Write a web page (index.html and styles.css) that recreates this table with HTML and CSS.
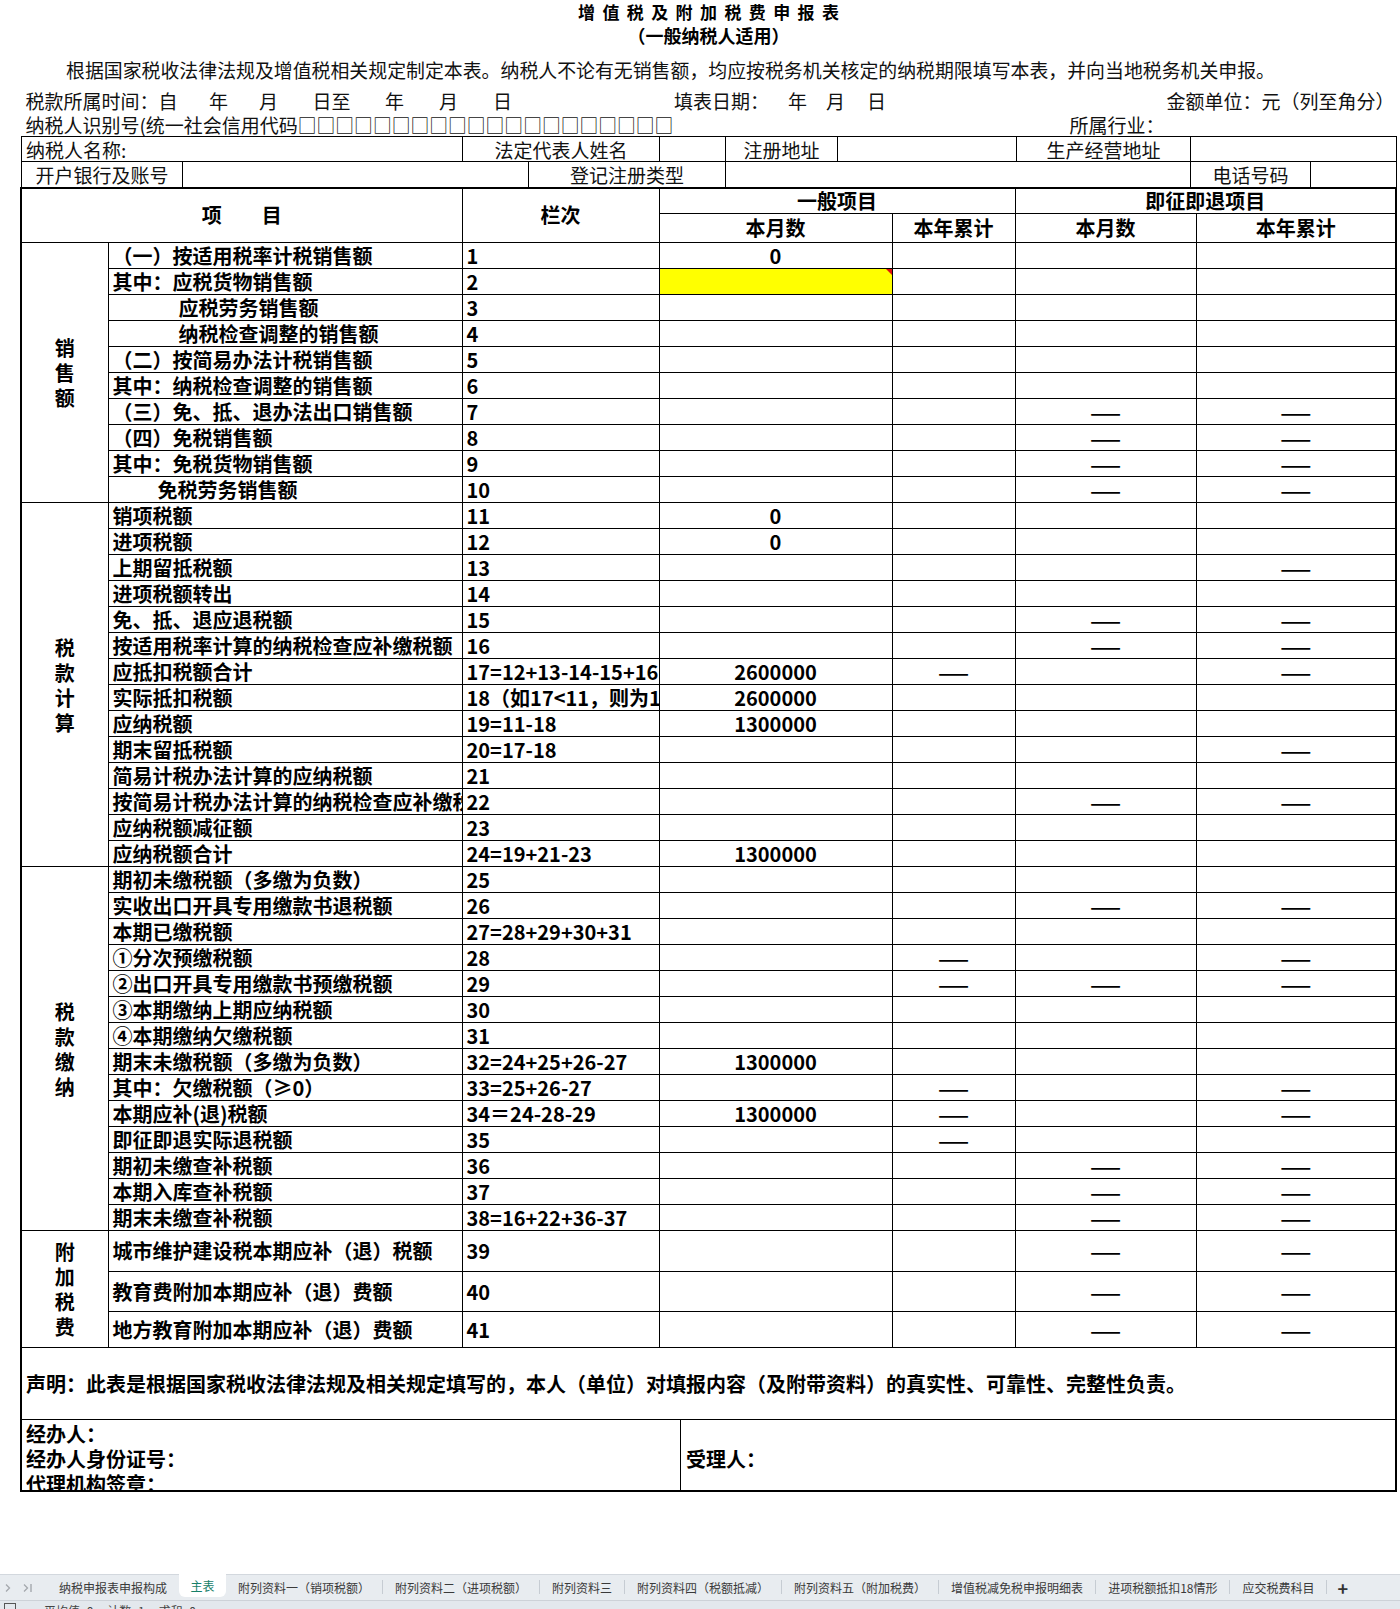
FILE: index.html
```html
<!DOCTYPE html>
<html lang="zh-CN">
<head>
<meta charset="utf-8">
<title>增值税及附加税费申报表</title>
<link rel="stylesheet" href="styles.css">
</head>
<body>
<div class="page">
  <main class="sheet">
    <h1 class="title">增值税及附加税费申报表</h1>
    <h2 class="subtitle">（一般纳税人适用）</h2>
    <p class="desc">根据国家税收法律法规及增值税相关规定制定本表。纳税人不论有无销售额，均应按税务机关核定的纳税期限填写本表，并向当地税务机关申报。</p>
    <div class="period">
      <span>税款所属时间：自</span><span>年</span><span>月</span><span>日至</span><span>年</span><span>月</span><span>日</span><span>填表日期：</span><span>年</span><span>月</span><span>日</span><span>金额单位：元（列至角分）</span>
    </div>
    <div class="taxid">
      <span class="taxid-label">纳税人识别号(统一社会信用代码)</span>
      <span class="boxes">□□□□□□□□□□□□□□□□□□□□</span>
      <span>所属行业：</span>
    </div>
    <div class="info info-1">
      <div class="ic ic-left">纳税人名称:</div>
      <div class="ic">法定代表人姓名</div>
      <div class="ic"></div>
      <div class="ic">注册地址</div>
      <div class="ic"></div>
      <div class="ic">生产经营地址</div>
      <div class="ic"></div>
    </div>
    <div class="info info-2">
      <div class="ic">开户银行及账号</div>
      <div class="ic"></div>
      <div class="ic">登记注册类型</div>
      <div class="ic"></div>
      <div class="ic">电话号码</div>
      <div class="ic"></div>
    </div>

    <table class="form">
      <colgroup>
        <col class="w-cat"><col class="w-item"><col class="w-no"><col class="w-m1"><col class="w-y1"><col class="w-m2"><col class="w-y2">
      </colgroup>
      <tr class="h-a">
        <th colspan="2" rowspan="2">项　　目</th>
        <th rowspan="2">栏次</th>
        <th colspan="2">一般项目</th>
        <th colspan="2">即征即退项目</th>
      </tr>
      <tr class="h-b">
        <th>本月数</th><th>本年累计</th><th>本月数</th><th>本年累计</th>
      </tr>

      <tr class="r"><td class="cat" rowspan="10"><div class="vt">销售额</div></td><td class="item">（一）按适用税率计税销售额</td><td class="no">1</td><td class="v">0</td><td></td><td></td><td></td></tr>
      <tr class="r"><td class="item">其中：应税货物销售额</td><td class="no">2</td><td class="hl"></td><td></td><td></td><td></td></tr>
      <tr class="r"><td class="item ind-a">应税劳务销售额</td><td class="no">3</td><td></td><td></td><td></td><td></td></tr>
      <tr class="r"><td class="item ind-a">纳税检查调整的销售额</td><td class="no">4</td><td></td><td></td><td></td><td></td></tr>
      <tr class="r"><td class="item">（二）按简易办法计税销售额</td><td class="no">5</td><td></td><td></td><td></td><td></td></tr>
      <tr class="r"><td class="item">其中：纳税检查调整的销售额</td><td class="no">6</td><td></td><td></td><td></td><td></td></tr>
      <tr class="r"><td class="item">（三）免、抵、退办法出口销售额</td><td class="no">7</td><td></td><td></td><td class="d">——</td><td class="d">——</td></tr>
      <tr class="r"><td class="item">（四）免税销售额</td><td class="no">8</td><td></td><td></td><td class="d">——</td><td class="d">——</td></tr>
      <tr class="r"><td class="item">其中：免税货物销售额</td><td class="no">9</td><td></td><td></td><td class="d">——</td><td class="d">——</td></tr>
      <tr class="r"><td class="item ind-b">免税劳务销售额</td><td class="no">10</td><td></td><td></td><td class="d">——</td><td class="d">——</td></tr>

      <tr class="r"><td class="cat" rowspan="14"><div class="vt">税款计算</div></td><td class="item">销项税额</td><td class="no">11</td><td class="v">0</td><td></td><td></td><td></td></tr>
      <tr class="r"><td class="item">进项税额</td><td class="no">12</td><td class="v">0</td><td></td><td></td><td></td></tr>
      <tr class="r"><td class="item">上期留抵税额</td><td class="no">13</td><td></td><td></td><td></td><td class="d">——</td></tr>
      <tr class="r"><td class="item">进项税额转出</td><td class="no">14</td><td></td><td></td><td></td><td></td></tr>
      <tr class="r"><td class="item">免、抵、退应退税额</td><td class="no">15</td><td></td><td></td><td class="d">——</td><td class="d">——</td></tr>
      <tr class="r"><td class="item">按适用税率计算的纳税检查应补缴税额</td><td class="no">16</td><td></td><td></td><td class="d">——</td><td class="d">——</td></tr>
      <tr class="r"><td class="item">应抵扣税额合计</td><td class="no">17=12+13-14-15+16</td><td class="v">2600000</td><td class="d">——</td><td></td><td class="d">——</td></tr>
      <tr class="r"><td class="item">实际抵扣税额</td><td class="no">18（如17&lt;11，则为17，否则为11）</td><td class="v">2600000</td><td></td><td></td><td></td></tr>
      <tr class="r"><td class="item">应纳税额</td><td class="no">19=11-18</td><td class="v">1300000</td><td></td><td></td><td></td></tr>
      <tr class="r"><td class="item">期末留抵税额</td><td class="no">20=17-18</td><td></td><td></td><td></td><td class="d">——</td></tr>
      <tr class="r"><td class="item">简易计税办法计算的应纳税额</td><td class="no">21</td><td></td><td></td><td></td><td></td></tr>
      <tr class="r"><td class="item">按简易计税办法计算的纳税检查应补缴税额</td><td class="no">22</td><td></td><td></td><td class="d">——</td><td class="d">——</td></tr>
      <tr class="r"><td class="item">应纳税额减征额</td><td class="no">23</td><td></td><td></td><td></td><td></td></tr>
      <tr class="r"><td class="item">应纳税额合计</td><td class="no">24=19+21-23</td><td class="v">1300000</td><td></td><td></td><td></td></tr>

      <tr class="r"><td class="cat" rowspan="14"><div class="vt">税款缴纳</div></td><td class="item">期初未缴税额（多缴为负数）</td><td class="no">25</td><td></td><td></td><td></td><td></td></tr>
      <tr class="r"><td class="item">实收出口开具专用缴款书退税额</td><td class="no">26</td><td></td><td></td><td class="d">——</td><td class="d">——</td></tr>
      <tr class="r"><td class="item">本期已缴税额</td><td class="no">27=28+29+30+31</td><td></td><td></td><td></td><td></td></tr>
      <tr class="r"><td class="item">①分次预缴税额</td><td class="no">28</td><td></td><td class="d">——</td><td></td><td class="d">——</td></tr>
      <tr class="r"><td class="item">②出口开具专用缴款书预缴税额</td><td class="no">29</td><td></td><td class="d">——</td><td class="d">——</td><td class="d">——</td></tr>
      <tr class="r"><td class="item">③本期缴纳上期应纳税额</td><td class="no">30</td><td></td><td></td><td></td><td></td></tr>
      <tr class="r"><td class="item">④本期缴纳欠缴税额</td><td class="no">31</td><td></td><td></td><td></td><td></td></tr>
      <tr class="r"><td class="item">期末未缴税额（多缴为负数）</td><td class="no">32=24+25+26-27</td><td class="v">1300000</td><td></td><td></td><td></td></tr>
      <tr class="r"><td class="item">其中：欠缴税额（≥0）</td><td class="no">33=25+26-27</td><td></td><td class="d">——</td><td></td><td class="d">——</td></tr>
      <tr class="r"><td class="item">本期应补(退)税额</td><td class="no">34＝24-28-29</td><td class="v">1300000</td><td class="d">——</td><td></td><td class="d">——</td></tr>
      <tr class="r"><td class="item">即征即退实际退税额</td><td class="no">35</td><td></td><td class="d">——</td><td></td><td></td></tr>
      <tr class="r"><td class="item">期初未缴查补税额</td><td class="no">36</td><td></td><td></td><td class="d">——</td><td class="d">——</td></tr>
      <tr class="r"><td class="item">本期入库查补税额</td><td class="no">37</td><td></td><td></td><td class="d">——</td><td class="d">——</td></tr>
      <tr class="r"><td class="item">期末未缴查补税额</td><td class="no">38=16+22+36-37</td><td></td><td></td><td class="d">——</td><td class="d">——</td></tr>

      <tr class="r41"><td class="cat" rowspan="3"><div class="vt">附加税费</div></td><td class="item">城市维护建设税本期应补（退）税额</td><td class="no">39</td><td></td><td></td><td class="d">——</td><td class="d">——</td></tr>
      <tr class="r40"><td class="item">教育费附加本期应补（退）费额</td><td class="no">40</td><td></td><td></td><td class="d">——</td><td class="d">——</td></tr>
      <tr class="r36"><td class="item">地方教育附加本期应补（退）费额</td><td class="no">41</td><td></td><td></td><td class="d">——</td><td class="d">——</td></tr>

      <tr class="decl"><td colspan="7">声明：此表是根据国家税收法律法规及相关规定填写的，本人（单位）对填报内容（及附带资料）的真实性、可靠性、完整性负责。</td></tr>
      <tr class="sign"><td colspan="7" class="sign-cell">
        <div class="sign-wrap">
          <div class="sign-left">
            <div>经办人：</div>
            <div>经办人身份证号：</div>
            <div>代理机构签章：</div>
          </div>
          <div class="sign-right">受理人：</div>
        </div>
      </td></tr>
    </table>
  </main>

  <nav class="tabbar">
    <div class="tabnav">
      <svg class="nav-ic" width="8" height="10" viewBox="0 0 8 10"><path d="M2 1.5 L5.5 5 L2 8.5" fill="none" stroke="#a4a8ad" stroke-width="1.3"/></svg>
      <svg class="nav-ic nav-last" width="12" height="10" viewBox="0 0 12 10"><path d="M2 1.5 L5.5 5 L2 8.5" fill="none" stroke="#a4a8ad" stroke-width="1.3"/><path d="M9 1 V9" stroke="#a4a8ad" stroke-width="1.4"/></svg>
    </div>
    <div class="tab">纳税申报表申报构成</div>
    <div class="tab active">主表</div>
    <div class="tab">附列资料一（销项税额）</div>
    <span class="sep"></span>
    <div class="tab">附列资料二（进项税额）</div>
    <span class="sep"></span>
    <div class="tab">附列资料三</div>
    <span class="sep"></span>
    <div class="tab">附列资料四（税额抵减）</div>
    <span class="sep"></span>
    <div class="tab">附列资料五（附加税费）</div>
    <span class="sep"></span>
    <div class="tab">增值税减免税申报明细表</div>
    <span class="sep"></span>
    <div class="tab">进项税额抵扣18情形</div>
    <span class="sep"></span>
    <div class="tab">应交税费科目</div>
    <span class="sep"></span>
    <div class="add">+</div>
  </nav>
  <div class="status"><span class="st-box"></span><span>平均值=0</span><span>计数=1</span><span>求和=0</span></div>
</div>
</body>
</html>
```

FILE: styles.css
```css
* { box-sizing: border-box; }
html, body { margin: 0; padding: 0; background: #fff; }
body {
  font-family: "Noto Sans CJK SC", "Noto Sans", sans-serif;
  color: #000;
}
.page {
  width: 1400px;
  height: 1609px;
  display: flex;
  flex-direction: column;
  overflow: hidden;
}
.sheet { flex: 1; min-height: 0; }

.title {
  margin: 0 0 0 21px;
  width: 1375px;
  height: 27px;
  line-height: 23px;
  text-align: center;
  font-size: 17px;
  font-weight: 700;
  letter-spacing: 7.4px;
  padding-left: 7.4px;
}
.subtitle {
  margin: 0 0 0 21px;
  width: 1375px;
  height: 22px;
  line-height: 17px;
  text-align: center;
  font-size: 18px;
  font-weight: 700;
}
.desc {
  margin: 10px 0 0 0;
  height: 24px;
  line-height: 21px;
  padding-left: 66px;
  font-size: 18.9px;
  white-space: nowrap;
  color: #111;
}
.period {
  margin-top: 8px;
  height: 24px;
  line-height: 20px;
  display: grid;
  grid-template-columns: 183.6px 50px 53.5px 72.5px 54px 54px 181px 114px 38px 41px 299.5px auto;
  padding-left: 25.4px;
  font-size: 19px;
  white-space: nowrap;
  color: #111;
}
.taxid {
  height: 21px;
  line-height: 19px;
  display: grid;
  grid-template-columns: 272.4px 771.8px auto;
  padding-left: 25.4px;
  font-size: 19px;
  white-space: nowrap;
  color: #111;
}
.taxid-label { overflow: hidden; }
.boxes { font-size: 18.8px; letter-spacing: 0; }

.info {
  display: grid;
  margin-left: 21px;
  width: 1376px;
  border-top: 1px solid #000;
  border-right: 1px solid #000;
  font-size: 19px;
  color: #111;
}
.info-1 { height: 25px; grid-template-columns: 441px 197px 66px 112px 179px 174px 206px; }
.info-2 { height: 26px; grid-template-columns: 161px 346px 197px 465px 120px 86px; }
.ic {
  border-left: 1px solid #000;
  text-align: center;
  white-space: nowrap;
  line-height: 22px;
  padding-top: 2px;
}
.ic-left { text-align: left; padding-left: 4px; }

.form {
  border-collapse: collapse;
  table-layout: fixed;
  width: 1377px;
  margin-left: 20px;
  border: 2px solid #000;
  font-size: 20px;
  font-weight: 700;
}
.w-cat { width: 87px; }
.w-item { width: 354px; }
.w-no { width: 197px; }
.w-m1 { width: 233px; }
.w-y1 { width: 123px; }
.w-m2 { width: 181px; }
.w-y2 { width: 200px; }

.form th, .form td {
  border: 1px solid #000;
  padding: 1px 4px 0;
  white-space: nowrap;
  line-height: 22px;
  vertical-align: middle;
}
.form th { text-align: center; font-weight: 700; padding: 0; }
.h-a { height: 25px; }
.h-b { height: 29px; }
.r { height: 26px; }
.r41 { height: 41px; }
.r40 { height: 40px; }
.r36 { height: 36px; }

.cat { text-align: center; }
.vt {
  width: 20px;
  margin: 0 auto;
  line-height: 25px;
  white-space: normal;
  word-break: break-all;
}
.form td.item { padding-left: 4px; overflow: hidden; text-overflow: clip; }
.form td.ind-a { padding-left: 70px; }
.form td.ind-b { padding-left: 49px; }
.form td.no { padding-left: 4px; overflow: hidden; text-overflow: clip; }
.v { text-align: center; }
.form td.d { text-align: center; font-weight: 700; font-size: 18px; }
.hl { background: #ffff00; position: relative; }
.hl::after {
  content: "";
  position: absolute;
  top: 0;
  right: 0;
  border-top: 6px solid #e01010;
  border-left: 6px solid transparent;
}

.decl { height: 72px; }
.decl td { padding-left: 4px; }
.sign { height: 71px; }
.form td.sign-cell { padding: 0; vertical-align: top; }
.sign-wrap { display: flex; height: 70px; }
.sign-left {
  width: 659px;
  border-right: 1px solid #000;
  padding: 1px 4px 0;
  line-height: 25px;
  overflow: hidden;
}
.sign-right {
  flex: 1;
  display: flex;
  align-items: center;
  padding: 8px 5px 0;
}

.tabbar {
  height: 26px;
  flex: none;
  display: flex;
  align-items: stretch;
  background: #e8ecf0;
  border-top: 1px solid #d3d8de;
  font-size: 12px;
  color: #3a3a3a;
}
.tabnav {
  width: 47px;
  display: flex;
  align-items: center;
  padding-left: 4px;
  gap: 10px;
}
.tab {
  padding: 0 12px;
  display: flex;
  align-items: center;
  white-space: nowrap;
  height: 25px;
}
.tab.active {
  background: #fff;
  color: #178069;
  padding: 0 11.5px;
  height: 23px;
  margin-top: -1px;
  border-radius: 0 0 6px 6px;
}
.sep {
  width: 1px;
  background: #c6ccd3;
  margin: 5px 0 6px;
}
.add {
  padding: 0 10px;
  display: flex;
  align-items: center;
  font-size: 18px;
  font-weight: 700;
  color: #333;
}
.status {
  height: 9px;
  flex: none;
  background: #e3e8ed;
  border-top: 1px solid #cdd2d8;
  overflow: hidden;
  display: flex;
  gap: 14px;
  padding: 2px 0 0 4px;
  font-size: 12px;
  line-height: 16px;
  color: #444;
}
.st-box {
  width: 12px;
  height: 12px;
  border: 1px solid #555;
  margin-right: 14px;
}
```
